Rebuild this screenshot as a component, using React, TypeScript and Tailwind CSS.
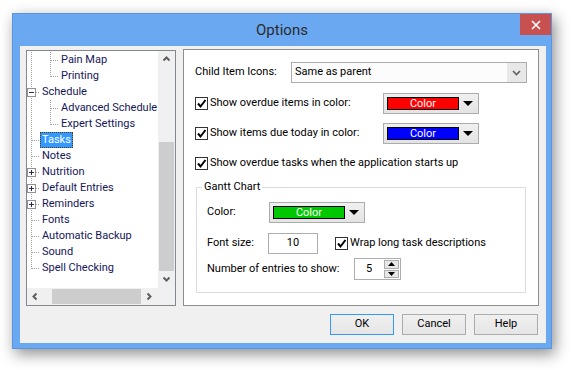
import React from 'react';

type Node = { label: string; level: 0 | 1; exp?: '+' | '-'; last?: boolean; selected?: boolean };

const nodes: Node[] = [
	{ label: 'Pain Map', level: 1 },
	{ label: 'Printing', level: 1, last: true },
	{ label: 'Schedule', level: 0, exp: '-' },
	{ label: 'Advanced Schedule', level: 1 },
	{ label: 'Expert Settings', level: 1, last: true },
	{ label: 'Tasks', level: 0, selected: true },
	{ label: 'Notes', level: 0 },
	{ label: 'Nutrition', level: 0, exp: '+' },
	{ label: 'Default Entries', level: 0, exp: '+' },
	{ label: 'Reminders', level: 0, exp: '+' },
	{ label: 'Fonts', level: 0 },
	{ label: 'Automatic Backup', level: 0 },
	{ label: 'Sound', level: 0 },
	{ label: 'Spell Checking', level: 0, last: true },
];

const dot = { stroke: '#a0a0a0', strokeWidth: 1, strokeDasharray: '1 1' };

function TreeLines({ n }: { n: Node })
{
	const w = n.level === 0 ? 13 : 32;
	const rootLast = n.level === 0 && n.last;
	return (
		<svg width={w} height={16} className="shrink-0">
			<line x1={4.5} y1={0} x2={4.5} y2={rootLast ? 9 : 16} {...dot} />
			{n.level === 0 && <line x1={n.exp ? 9 : 5} y1={8.5} x2={12} y2={8.5} {...dot} />}
			{n.level === 1 && (
				<>
					<line x1={23.5} y1={0} x2={23.5} y2={n.last ? 9 : 16} {...dot} />
					<line x1={24} y1={8.5} x2={31} y2={8.5} {...dot} />
				</>
			)}
			{n.exp && (
				<g>
					<rect x={0.5} y={4.5} width={8} height={8} fill="#fff" stroke="#919191" />
					<line x1={2} y1={8.5} x2={7} y2={8.5} stroke="#2a2a5a" />
					{n.exp === '+' && <line x1={4.5} y1={6} x2={4.5} y2={11} stroke="#2a2a5a" />}
				</g>
			)}
		</svg>
	);
}

function Chevron({ dir }: { dir: 'up' | 'down' | 'left' | 'right' })
{
	const d = {
		up: 'M1.5 5.5 L4.5 2.5 L7.5 5.5',
		down: 'M1.5 2.5 L4.5 5.5 L7.5 2.5',
		left: 'M5.5 1.5 L2.5 4.5 L5.5 7.5',
		right: 'M2.5 1.5 L5.5 4.5 L2.5 7.5',
	}[dir];
	return (
		<svg width={9} height={9}>
			<path d={d} fill="none" stroke="#606060" strokeWidth={2} />
		</svg>
	);
}

function Tree()
{
	return (
		<div className="mt-[4px] w-[150px] h-[256px] border border-[#828790] bg-white grid grid-cols-[131px_17px] grid-rows-[237px_17px]">
			<div className="overflow-hidden pt-[1px] text-[#16165a] text-[11px] leading-[16px]">
				{nodes.map(n => (
					<div key={n.label} className="flex h-[16px] items-center">
						<TreeLines n={n} />
						<span
							className={n.selected
								? 'h-[16px] px-[1px] bg-[#3399ff] text-white border border-dotted border-[#5a3a10] leading-[14px] whitespace-nowrap'
								: 'px-[2px] whitespace-nowrap'}
						>
							{n.label}
						</span>
					</div>
				))}
			</div>
			<div className="bg-[#f0f0f0] flex flex-col">
				<div className="h-[17px] flex items-center justify-center"><Chevron dir="up" /></div>
				<div className="flex-1 flex flex-col justify-end px-[1px]">
					<div className="h-[129px] bg-[#cdcdcd]" />
				</div>
				<div className="h-[17px] flex items-center justify-center"><Chevron dir="down" /></div>
			</div>
			<div className="bg-[#f0f0f0] flex">
				<div className="w-[17px] flex items-center justify-center"><Chevron dir="left" /></div>
				<div className="flex-1 flex justify-end py-[1px]">
					<div className="w-[89px] bg-[#cdcdcd]" />
				</div>
				<div className="w-[17px] flex items-center justify-center"><Chevron dir="right" /></div>
			</div>
			<div className="bg-[#f0f0f0]" />
		</div>
	);
}

function Check({ label }: { label: string })
{
	return (
		<div className="flex items-center gap-[2px]">
			<div className="w-[13px] h-[13px] border border-[#333] bg-white flex items-center justify-center">
				<svg width={11} height={11}>
					<path d="M2 5.5 L4.5 8.5 L9.5 2" fill="none" stroke="#000" strokeWidth={2} />
				</svg>
			</div>
			<span className="whitespace-nowrap">{label}</span>
		</div>
	);
}

function ColorButton({ color, w }: { color: string; w: string })
{
	return (
		<div className={`${w} h-[21px] border border-[#acacac] bg-gradient-to-b from-[#f0f0f0] to-[#e3e3e3] flex items-center pl-[3px] pr-[5px] gap-[4px]`}>
			<div className="flex-1 h-[13px] border border-black flex items-center justify-center text-white leading-none" style={{ background: color }}>
				Color
			</div>
			<svg width={10} height={6}>
				<path d="M0 0 L10 0 L5 5 Z" fill="#000" />
			</svg>
		</div>
	);
}

function Button({ label, def }: { label: string; def?: boolean })
{
	return (
		<div className={`w-[64px] h-[21px] border ${def ? 'border-[#3399ff]' : 'border-[#acacac]'} bg-gradient-to-b from-[#f0f0f0] to-[#e5e5e5] flex items-center justify-center text-black`}>
			{label}
		</div>
	);
}

function Panel()
{
	return (
		<div className="mt-[3px] w-[356px] h-[257px] border border-[#8e8e8e] bg-white pl-[11px] pr-[11px] pt-[12px] text-black">
			<div className="flex items-center">
				<span className="w-[96px]">Child Item Icons:</span>
				<div className="flex-1 h-[21px] border border-[#acacac] bg-[#fcfcfc] flex items-center">
					<span className="flex-1 pl-[3px]">Same as parent</span>
					<div className="w-[19px] h-full bg-[#e8e8e8] flex items-center justify-center">
						<svg width={9} height={6}>
							<path d="M1 1 L4.5 4.5 L8 1" fill="none" stroke="#606060" strokeWidth={1.6} />
						</svg>
					</div>
				</div>
			</div>
			<div className="mt-[10px] flex items-center">
				<div className="w-[188px]"><Check label="Show overdue items in color:" /></div>
				<ColorButton color="#ff0000" w="w-[96px]" />
			</div>
			<div className="mt-[9px] flex items-center">
				<div className="w-[188px]"><Check label="Show items due today in color:" /></div>
				<ColorButton color="#0000ff" w="w-[96px]" />
			</div>
			<div className="mt-[9px] h-[20px] flex items-center">
				<Check label="Show overdue tasks when the application starts up" />
			</div>
			<fieldset className="mt-[6px] ml-[1px] w-[330px] h-[114px] border border-[#dcdcdc] pl-[10px] pt-[7px]">
				<legend className="-ml-[5px] px-[2px] leading-[16px]">Gantt Chart</legend>
				<div className="flex items-center">
					<span className="w-[62px]">Color:</span>
					<ColorButton color="#00c800" w="w-[96px]" />
				</div>
				<div className="mt-[10px] flex items-center">
					<span className="w-[61px]">Font size:</span>
					<div className="w-[50px] h-[21px] border border-[#abadb3] bg-white flex items-center justify-center">10</div>
					<div className="ml-[17px]"><Check label="Wrap long task descriptions" /></div>
				</div>
				<div className="mt-[4px] flex items-center">
					<span className="w-[147px]">Number of entries to show:</span>
					<div className="w-[47px] h-[22px] border border-[#abadb3] bg-white flex">
						<div className="flex-1 flex items-center justify-center">5</div>
						<div className="w-[17px] flex flex-col gap-[1px] p-[1px]">
							{[0, 1].map(i => (
								<div key={i} className="flex-1 border border-[#acacac] bg-[#e8e8e8] flex items-center justify-center">
									<svg width={7} height={4}>
										<path d={i === 0 ? 'M0 4 L7 4 L3.5 0 Z' : 'M0 0 L7 0 L3.5 4 Z'} fill="#000" />
									</svg>
								</div>
							))}
						</div>
					</div>
				</div>
			</fieldset>
		</div>
	);
}

export default function App()
{
	return (
		<div className="w-[573px] h-[370px] bg-white pt-[13px] pl-[12px] font-[family-name:Roboto,sans-serif] text-[11px]">
			<div className="w-[540px] h-[336px] bg-[#6aa9f1] border border-[#5896e0] shadow-[3px_5px_14px_rgba(0,0,0,0.45)] flex flex-col">
				<div className="h-[32px] grid grid-cols-[37px_1fr_37px]">
					<div />
					<div className="flex items-center justify-center text-[15px] text-[#2b2b2b] pt-[1px]">Options</div>
					<div className="flex justify-end">
						<div className="w-[31px] h-[21px] bg-[#c75050] flex items-center justify-center">
							<svg width={10} height={10}>
								<path d="M1 1 L9 9 M9 1 L1 9" stroke="#fff" strokeWidth={1.6} />
							</svg>
						</div>
					</div>
				</div>
				<div className="ml-[7px] mr-[5px] h-[297px] bg-[#f0f0f0] flex flex-col">
					<div className="flex items-start pl-[6px] gap-[7px]">
						<Tree />
						<Panel />
					</div>
					<div className="mt-[8px] flex justify-end gap-[8px] pr-[8px]">
						<Button label="OK" def />
						<Button label="Cancel" />
						<Button label="Help" />
					</div>
				</div>
			</div>
		</div>
	);
}
